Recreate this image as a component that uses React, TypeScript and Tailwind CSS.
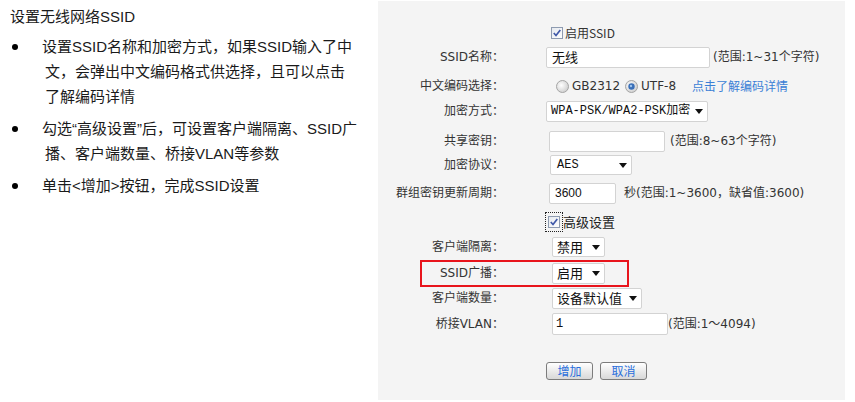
import React from "react";

const Arrow = () => (
  <svg width="8" height="5" viewBox="0 0 8 5" className="shrink-0">
    <path d="M0 0 L8 0 L4 5 Z" fill="#111" />
  </svg>
);

const Check = () => (
  <svg width="12" height="12" viewBox="0 0 12 12" className="shrink-0">
    <defs>
      <linearGradient id="cb" x1="0" y1="0" x2="1" y2="1">
        <stop offset="0" stopColor="#e4e8ee" />
        <stop offset="1" stopColor="#ffffff" />
      </linearGradient>
    </defs>
    <rect x="0.5" y="0.5" width="11" height="11" fill="url(#cb)" stroke="#8e9bb0" />
    <path d="M2.8 6 L5 8.5 L9.3 3" fill="none" stroke="#3f58a8" strokeWidth="1.7" />
  </svg>
);

const Radio = ({ on }: { on?: boolean }) => (
  <svg width="13" height="13" viewBox="0 0 13 13" className="shrink-0">
    <defs>
      <radialGradient id={on ? "ron" : "roff"} cx="0.4" cy="0.4" r="0.7">
        <stop offset="0" stopColor="#ffffff" />
        <stop offset="1" stopColor="#c9c9c9" />
      </radialGradient>
    </defs>
    <circle cx="6.5" cy="6.5" r="6" fill={on ? "url(#ron)" : "url(#roff)"} stroke="#a5a5a5" />
    {on && <circle cx="6.5" cy="6.5" r="3.2" fill="#3a6fb8" />}
    {on && <circle cx="6" cy="6" r="1.2" fill="#9fc4ec" />}
  </svg>
);

const Row = ({
  label,
  mt,
  children,
  extra,
}: {
  label?: string;
  mt: string;
  children: React.ReactNode;
  extra?: React.ReactNode;
}) => (
  <div className={`relative flex items-center h-[22px] ${mt}`}>
    <div className="w-[126px] shrink-0 text-right whitespace-nowrap">{label}</div>
    <div className="flex items-center pl-[42px] whitespace-nowrap">{children}</div>
    {extra}
  </div>
);

export default function App() {
  return (
    <div className="w-[855px] h-[402px] bg-white flex overflow-hidden">
      <div className="w-[378px] shrink-0 pl-[10px] pt-[4px] text-[15px] leading-[25px] text-[#1a1a1a] font-['Liberation_Sans','Noto_Sans_CJK_SC',sans-serif]">
        <div>设置无线网络SSID</div>
        <ul className="mt-[5px] flex flex-col gap-[7px]">
          <li className="flex">
            <span className="w-[32px] shrink-0 pl-[2px] pt-[10px]">
              <span className="block w-[6px] h-[6px] rounded-full bg-black" />
            </span>
            <div>
              <div>设置SSID名称和加密方式，如果SSID输入了中</div>
              <div className="pl-[3px]">文，会弹出中文编码格式供选择，且可以点击</div>
              <div className="pl-[3px]">了解编码详情</div>
            </div>
          </li>
          <li className="flex">
            <span className="w-[32px] shrink-0 pl-[2px] pt-[10px]">
              <span className="block w-[6px] h-[6px] rounded-full bg-black" />
            </span>
            <div>
              <div>勾选“高级设置”后，可设置客户端隔离、SSID广</div>
              <div className="pl-[3px]">播、客户端数量、桥接VLAN等参数</div>
            </div>
          </li>
          <li className="flex">
            <span className="w-[32px] shrink-0 pl-[2px] pt-[10px]">
              <span className="block w-[6px] h-[6px] rounded-full bg-black" />
            </span>
            <div>
              <div>单击&lt;增加&gt;按钮，完成SSID设置</div>
            </div>
          </li>
        </ul>
      </div>

      <div className="mt-[1px] w-[467px] h-[399px] shrink-0 bg-[#f4f4f4] pt-[21px] text-[12px] leading-[14px] text-[#333] font-['DejaVu_Sans','Noto_Sans_CJK_SC',sans-serif]">
        <Row mt="mt-0">
          <span className="ml-[5px] flex"><Check /></span>
          <span className="ml-[2px] font-['Noto_Sans_CJK_SC',sans-serif]">启用SSID</span>
        </Row>

        <Row label="SSID名称：" mt="mt-[2px]">
          <div className="w-[164px] h-[21px] bg-white border border-[#d3d3d3] rounded-[2px] flex items-center pl-[5px] text-[13px] text-[#111] font-['Noto_Sans_CJK_SC',sans-serif]">
            无线
          </div>
          <span className="ml-[3px]">(范围:1~31个字符)</span>
        </Row>

        <Row label="中文编码选择：" mt="mt-[7px]">
          <span className="ml-[10px] flex"><Radio /></span>
          <span className="ml-[3px]">GB2312</span>
          <span className="ml-[5px] flex"><Radio on /></span>
          <span className="ml-[3px]">UTF-8</span>
          <span className="ml-[16px] text-[#3b7fd6] font-['Noto_Sans_CJK_SC',sans-serif]">点击了解编码详情</span>
        </Row>

        <Row label="加密方式：" mt="mt-[3px]">
          <div className="w-[162px] h-[21px] bg-white border border-[#d3d3d3] rounded-[2px] flex items-center justify-between pl-[4px] pr-[4px] text-[#111] font-['Liberation_Mono','Noto_Sans_CJK_SC',monospace]">
            <span>WPA-PSK/WPA2-PSK加密</span>
            <Arrow />
          </div>
        </Row>

        <Row label="共享密钥：" mt="mt-[8px]">
          <div className="ml-[3px] w-[116px] h-[21px] bg-white border border-[#d3d3d3] rounded-[2px]" />
          <span className="ml-[5px]">(范围:8~63个字符)</span>
        </Row>

        <Row label="加密协议：" mt="mt-[2px]">
          <div className="ml-[4px] w-[82px] h-[20px] bg-white border border-[#d3d3d3] rounded-[2px] flex items-center justify-between pl-[6px] pr-[4px] text-[#111] font-['Liberation_Mono',monospace]">
            <span>AES</span>
            <Arrow />
          </div>
        </Row>

        <Row label="群组密钥更新周期：" mt="mt-[6px]">
          <div className="ml-[3px] w-[67px] h-[21px] bg-white border border-[#d3d3d3] rounded-[2px] flex items-center pl-[5px] text-[#111] font-['Liberation_Sans',sans-serif]">
            3600
          </div>
          <span className="ml-[8px]">秒(范围:1~3600，缺省值:3600)</span>
        </Row>

        <Row mt="mt-[7px]">
          <span className="-ml-[1px] w-[18px] h-[20px] border border-dotted border-[#222] flex items-center justify-center">
            <Check />
          </span>
          <span className="ml-0 text-[13px] text-[#222] font-['Noto_Sans_CJK_SC',sans-serif]">高级设置</span>
        </Row>

        <Row label="客户端隔离：" mt="mt-[3px]">
          <div className="ml-[6px] w-[53px] h-[20px] bg-white border border-[#d3d3d3] rounded-[2px] flex items-center justify-between pl-[4px] pr-[4px] text-[13px] text-[#111] font-['Noto_Sans_CJK_SC',sans-serif]">
            <span>禁用</span>
            <Arrow />
          </div>
        </Row>

        <Row
          label="SSID广播："
          mt="mt-[4px]"
          extra={
            <span className="absolute left-[42px] top-[-2px] w-[209px] h-[27px] border-2 border-[#e8141c] pointer-events-none" />
          }
        >
          <div className="ml-[6px] w-[53px] h-[21px] bg-white border border-[#d3d3d3] rounded-[2px] flex items-center justify-between pl-[4px] pr-[4px] text-[13px] text-[#111] font-['Noto_Sans_CJK_SC',sans-serif]">
            <span>启用</span>
            <Arrow />
          </div>
        </Row>

        <Row label="客户端数量：" mt="mt-[3px]">
          <div className="ml-[6px] w-[90px] h-[21px] bg-white border border-[#d3d3d3] rounded-[2px] flex items-center justify-between pl-[4px] pr-[4px] text-[13px] text-[#111] font-['Noto_Sans_CJK_SC',sans-serif]">
            <span>设备默认值</span>
            <Arrow />
          </div>
        </Row>

        <Row label="桥接VLAN：" mt="mt-[4px]">
          <div className="ml-[6px] w-[116px] h-[22px] bg-white border border-[#d3d3d3] rounded-[2px] flex items-center pl-[3px] text-[#111] font-['Liberation_Mono',monospace]">
            1
          </div>
          <span>(范围:1～4094)</span>
        </Row>

        <div className="flex items-center h-[18px] mt-[27px] pl-[168px] gap-[7px]">
          <button className="w-[47px] h-[18px] border border-[#7c7c7c] rounded-[3px] bg-gradient-to-b from-[#ffffff] to-[#d8d8d8] text-[12px] leading-[16px] text-[#2a6fdc] font-['Noto_Sans_CJK_SC',sans-serif]">
            增加
          </button>
          <button className="w-[47px] h-[18px] border border-[#7c7c7c] rounded-[3px] bg-gradient-to-b from-[#ffffff] to-[#d8d8d8] text-[12px] leading-[16px] text-[#2a6fdc] font-['Noto_Sans_CJK_SC',sans-serif]">
            取消
          </button>
        </div>
      </div>
    </div>
  );
}
